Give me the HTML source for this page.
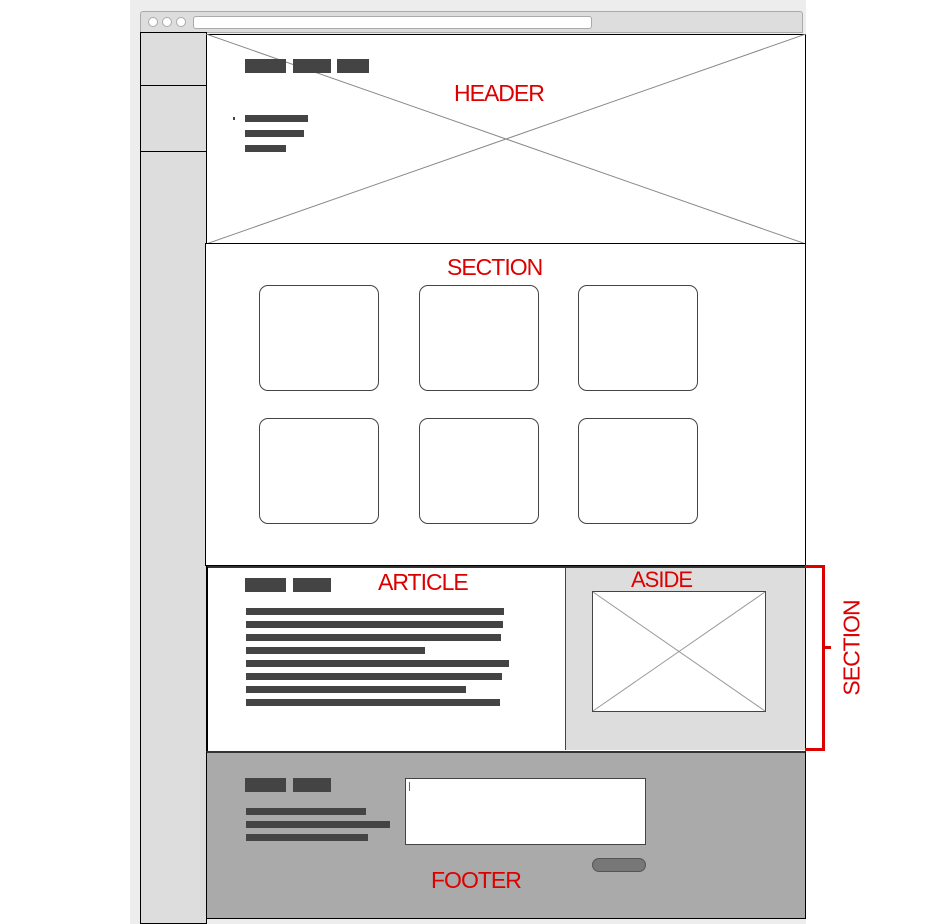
<!DOCTYPE html>
<html><head><style>
body{margin:0;width:936px;height:924px;background:#fff;position:relative;overflow:hidden;font-family:"Liberation Sans",sans-serif}
div{position:absolute;box-sizing:border-box}
.b{background:#444}
.lbl{color:#d00;font-size:23px;letter-spacing:-1px}
.card{border:1px solid #444;border-radius:9px;width:120px;height:106px;background:#fff}
</style></head><body>
<div style="left:130px;top:0;width:676px;height:924px;background:#ededed"></div>
<div style="left:140px;top:11px;width:663px;height:22px;background:#ddd;border:1px solid #aaa;border-radius:3px 3px 0 0"></div>
<div style="left:148px;top:17px;width:10px;height:10px;border-radius:50%;background:#fff;border:1px solid #aaa"></div>
<div style="left:162px;top:17px;width:10px;height:10px;border-radius:50%;background:#fff;border:1px solid #aaa"></div>
<div style="left:176px;top:17px;width:10px;height:10px;border-radius:50%;background:#fff;border:1px solid #aaa"></div>
<div style="left:193px;top:16px;width:399px;height:13px;background:#fff;border:1px solid #aaa;border-radius:3px"></div>
<div style="left:140px;top:32px;width:67px;height:892px;background:#ddd;border:1px solid #000"></div>
<div style="left:140px;top:85px;width:67px;height:1px;background:#000"></div>
<div style="left:140px;top:151px;width:67px;height:1px;background:#000"></div>
<!-- header -->
<div style="left:206px;top:34px;width:600px;height:210px;background:#fff;border:1px solid #000"></div>
<svg style="position:absolute;left:206px;top:34px" width="600" height="210"><line x1="0" y1="0" x2="600" y2="210" stroke="#888"/><line x1="0" y1="210" x2="600" y2="0" stroke="#888"/></svg>
<div class="b" style="left:245px;top:59px;width:41px;height:14px"></div>
<div class="b" style="left:293px;top:59px;width:38px;height:14px"></div>
<div class="b" style="left:337px;top:59px;width:32px;height:14px"></div>
<div class="b" style="left:233px;top:117px;width:2px;height:3px"></div>
<div class="b" style="left:245px;top:115px;width:63px;height:7px"></div>
<div class="b" style="left:245px;top:130px;width:59px;height:7px"></div>
<div class="b" style="left:245px;top:145px;width:41px;height:7px"></div>
<div class="lbl" style="left:454px;top:80px">HEADER</div>
<!-- section -->
<div style="left:205px;top:243px;width:601px;height:323px;background:#fff;border:1px solid #000"></div>
<div class="lbl" style="left:447px;top:254px">SECTION</div>
<div class="card" style="left:259px;top:285px"></div>
<div class="card" style="left:419px;top:285px"></div>
<div class="card" style="left:578px;top:285px"></div>
<div class="card" style="left:259px;top:418px"></div>
<div class="card" style="left:419px;top:418px"></div>
<div class="card" style="left:578px;top:418px"></div>
<!-- article/aside -->
<div style="left:207px;top:566px;width:599px;height:186px;background:#fff;border:1px solid #000;border-top:2px solid #333"></div>
<div style="left:565px;top:568px;width:240px;height:182px;background:#ddd;border-left:1px solid #444"></div>
<div class="lbl" style="left:378px;top:569px">ARTICLE</div>
<div class="lbl" style="left:631px;top:567px;font-size:22px">ASIDE</div>
<div class="b" style="left:245px;top:578px;width:41px;height:14px"></div>
<div class="b" style="left:293px;top:578px;width:38px;height:14px"></div>
<div class="b" style="left:246px;top:608px;width:258px;height:7px"></div>
<div class="b" style="left:246px;top:621px;width:257px;height:7px"></div>
<div class="b" style="left:246px;top:634px;width:255px;height:7px"></div>
<div class="b" style="left:246px;top:647px;width:179px;height:7px"></div>
<div class="b" style="left:246px;top:660px;width:263px;height:7px"></div>
<div class="b" style="left:246px;top:673px;width:256px;height:7px"></div>
<div class="b" style="left:246px;top:686px;width:220px;height:7px"></div>
<div class="b" style="left:246px;top:699px;width:254px;height:7px"></div>
<div style="left:592px;top:591px;width:174px;height:121px;background:#fff;border:1px solid #444"></div>
<svg style="position:absolute;left:592px;top:591px" width="174" height="121"><line x1="1" y1="1" x2="173" y2="120" stroke="#999"/><line x1="1" y1="120" x2="173" y2="1" stroke="#999"/></svg>
<!-- red bracket -->
<div style="left:805px;top:565px;width:20px;height:186px;border:3px solid #d00;border-left:none"></div>
<div style="left:825px;top:646px;width:6px;height:3px;background:#d00"></div>
<div class="lbl" style="left:852px;top:648px;transform:translate(-50%,-50%) rotate(-90deg);white-space:nowrap">SECTION</div>
<!-- footer -->
<div style="left:206px;top:751px;width:600px;height:168px;background:#aaa;border:1px solid #000;border-top:2px solid #333"></div>
<div class="b" style="left:245px;top:778px;width:41px;height:14px"></div>
<div class="b" style="left:293px;top:778px;width:38px;height:14px"></div>
<div class="b" style="left:246px;top:808px;width:120px;height:7px"></div>
<div class="b" style="left:246px;top:821px;width:144px;height:7px"></div>
<div class="b" style="left:246px;top:834px;width:122px;height:7px"></div>
<div style="left:405px;top:778px;width:241px;height:67px;background:#fff;border:1px solid #444"></div>
<div style="left:409px;top:782px;width:1px;height:9px;background:#669"></div>
<div style="left:592px;top:858px;width:54px;height:14px;background:#777;border:1px solid #555;border-radius:7px"></div>
<div class="lbl" style="left:431px;top:867px">FOOTER</div>
</body></html>
